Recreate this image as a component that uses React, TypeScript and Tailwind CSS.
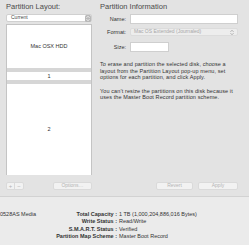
import type { ReactNode } from "react";

function Stepper({ muted }: { muted?: boolean }) {
  return (
    <svg width="6" height="7" viewBox="0 0 6 7" className="shrink-0">
      <path
        d="M1.5 2.8 3 1.3 4.5 2.8M1.5 4.2 3 5.7 4.5 4.2"
        fill="none"
        stroke={muted ? "#9a9a9a" : "#ffffff"}
        strokeWidth="0.8"
      />
    </svg>
  );
}

function Btn({ children, className }: { children: ReactNode; className: string }) {
  return (
    <div
      className={`flex h-[8px] items-center justify-center rounded-[2px] border border-[#dadada] bg-[#f2f2f2] text-[5px] text-[#b4b4b4] ${className}`}
    >
      {children}
    </div>
  );
}

function Row({ label, children }: { label: string; children: ReactNode }) {
  return (
    <div className="flex items-center">
      <span className="w-[26px] text-right text-[5.5px] text-[#333]">{label}</span>
      <div className="ml-[4px] flex-1">{children}</div>
    </div>
  );
}

export default function App() {
  const info = [
    ["Total Capacity", "1 TB (1,000,204,886,016 Bytes)"],
    ["Write Status", "Read/Write"],
    ["S.M.A.R.T. Status", "Verified"],
    ["Partition Map Scheme", "Master Boot Record"],
  ];

  return (
    <div
      className="flex h-[245px] w-[249px] flex-col overflow-hidden bg-[#e3e3e3] text-[#333]"
      style={{ fontFamily: '"Liberation Sans", Arial, sans-serif' }}
    >
      <div className="flex h-[196px] shrink-0 pl-[6px] pt-[3px]">
        {/* left column */}
        <div className="flex w-[86px] flex-col">
          <div className="h-[11px] text-[7.5px] leading-[8px] text-[#4a4a4a]">Partition Layout:</div>
          <div className="flex h-[8px] items-center justify-between rounded-[2px] border border-[#d0d0d0] bg-white pl-[4px]">
            <span className="text-[5px] text-[#444]">Current</span>
            <div className="flex h-[7px] w-[6px] items-center justify-center rounded-[1.5px] bg-[#b9b9b9]">
              <Stepper />
            </div>
          </div>
          <div className="mt-[2px] flex h-[151px] flex-col border-x border-t border-[#c4c4c4] bg-white">
            <div className="flex h-[43px] items-center justify-center text-[5.5px] text-[#333]">Mac OSX HDD</div>
            <div className="h-[4px] bg-[#d6d6d6]" />
            <div className="flex h-[8px] items-center justify-center text-[5.5px]">1</div>
            <div className="h-[4px] bg-[#d6d6d6]" />
            <div className="flex h-[90px] items-center justify-center text-[5.5px]">2</div>
          </div>
          <div className="mt-[7px] flex items-center justify-between">
            <div className="flex h-[8px] w-[18px] rounded-[2px] border border-[#dadada] bg-[#f2f2f2] text-[6px] leading-[6px] text-[#b4b4b4]">
              <span className="flex w-1/2 items-center justify-center border-r border-[#dadada]">+</span>
              <span className="flex w-1/2 items-center justify-center">−</span>
            </div>
            <Btn className="w-[39px]">Options…</Btn>
          </div>
        </div>

        {/* right column */}
        <div className="ml-[8px] flex w-[138px] flex-col">
          <div className="h-[11px] text-[7.5px] leading-[8px] text-[#4a4a4a]">Partition Information</div>
          <div className="flex flex-col">
            <Row label="Name:">
              <div className="h-[10px] border border-[#cfcfcf] bg-white" />
            </Row>
            <div className="mt-[4px]">
              <Row label="Format:">
                <div className="flex h-[8px] items-center justify-between rounded-[2px] border border-[#dcdcdc] bg-[#ededed] pl-[3px] pr-[2px]">
                  <span className="text-[5px] text-[#a8a8a8]">Mac OS Extended (Journaled)</span>
                  <Stepper muted />
                </div>
              </Row>
            </div>
            <div className="mt-[6px] w-[69px]">
              <Row label="Size:">
                <div className="h-[10px] border border-[#cfcfcf] bg-white" />
              </Row>
            </div>
          </div>
          <p className="mt-[9px] whitespace-nowrap text-[5.5px] leading-[6.3px] tracking-[0.1px] text-[#333]">
            To erase and partition the selected disk, choose a
            <br />
            layout from the Partition Layout pop-up menu, set
            <br />
            options for each partition, and click Apply.
          </p>
          <p className="mt-[8px] whitespace-nowrap text-[5.5px] leading-[6.3px] tracking-[0.1px] text-[#333]">
            You can’t resize the partitions on this disk because it
            <br />
            uses the Master Boot Record partition scheme.
          </p>
          <div className="mt-auto mb-[6px] ml-[56px] flex gap-[5px]">
            <Btn className="w-[37px]">Revert</Btn>
            <Btn className="w-[40px]">Apply</Btn>
          </div>
        </div>
      </div>

      {/* bottom info */}
      <div className="flex-1 border-t border-[#d2d2d2] bg-[#ebebeb] pt-[14px]">
        <div className="grid grid-cols-[117px_1fr] text-[5.5px] leading-[7.4px] text-[#333]">
          {info.map(([k, v], i) => (
            <div key={k} className="contents">
              <div className="flex justify-between">
                <span>{i === 0 ? "0528AS Media" : ""}</span>
                <span className="font-bold">{k} :</span>
              </div>
              <span className="pl-[2px]">{v}</span>
            </div>
          ))}
        </div>
      </div>
    </div>
  );
}
